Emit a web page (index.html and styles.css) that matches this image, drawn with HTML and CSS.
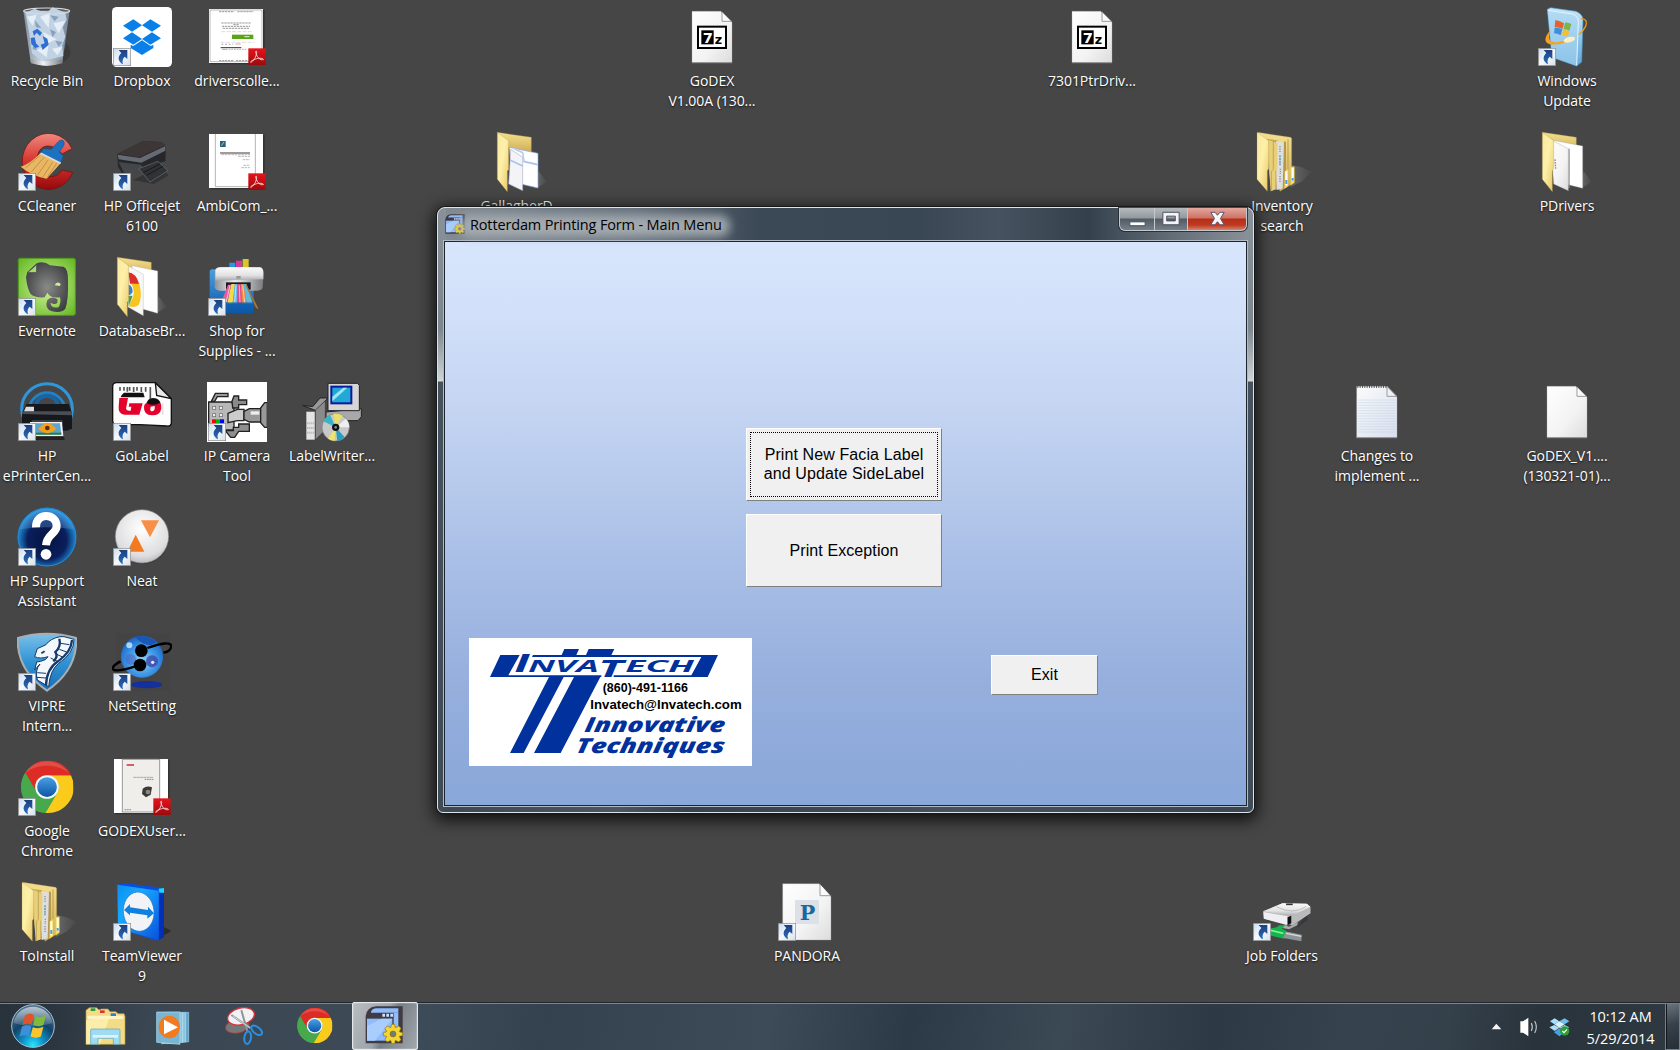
FILE: index.html
```html
<!DOCTYPE html>
<html lang="en">
<head>
<meta charset="utf-8">
<title>Desktop</title>
<link rel="stylesheet" href="styles.css">
</head>
<body>
<svg class="defs" width="0" height="0" aria-hidden="true">
  <defs>
    <linearGradient id="folderFront" x1="0" y1="0" x2="1" y2="1"><stop offset="0" stop-color="#fbe9a0"/><stop offset=".45" stop-color="#fdf0a8"/><stop offset="1" stop-color="#e8c765"/></linearGradient>
    <linearGradient id="folderBack" x1="0" y1="0" x2="0" y2="1"><stop offset="0" stop-color="#f5e08e"/><stop offset="1" stop-color="#cfae55"/></linearGradient>
    <linearGradient id="paper" x1="0" y1="0" x2="1" y2="1"><stop offset="0" stop-color="#ffffff"/><stop offset=".6" stop-color="#f3f3f3"/><stop offset="1" stop-color="#dcdcdc"/></linearGradient>
    <linearGradient id="note" x1="0" y1="0" x2="1" y2="1"><stop offset="0" stop-color="#fafbfc"/><stop offset="1" stop-color="#d9dfee"/></linearGradient>
    <linearGradient id="chip" x1="0" y1="0" x2="1" y2="1"><stop offset="0" stop-color="#c9dcf0"/><stop offset=".5" stop-color="#f6f9fc"/><stop offset="1" stop-color="#d5e0ea"/></linearGradient>
    <linearGradient id="arrowBlue" x1="0" y1="0" x2="0" y2="1"><stop offset="0" stop-color="#1d3f7e"/><stop offset="1" stop-color="#2a6cc0"/></linearGradient>
    <linearGradient id="pdfRed" x1="0" y1="0" x2="0" y2="1"><stop offset="0" stop-color="#e8131a"/><stop offset="1" stop-color="#9c0a0c"/></linearGradient>
    <linearGradient id="steel" x1="0" y1="0" x2="1" y2="0"><stop offset="0" stop-color="#8e9296"/><stop offset=".4" stop-color="#f0f1f2"/><stop offset="1" stop-color="#77797c"/></linearGradient>
    <linearGradient id="bin" x1="0" y1="0" x2="1" y2="0"><stop offset="0" stop-color="#7f8f9d"/><stop offset=".4" stop-color="#ccd8e4"/><stop offset="1" stop-color="#748494"/></linearGradient>
    <linearGradient id="redC" x1="0" y1="0" x2="0" y2="1"><stop offset="0" stop-color="#f08a80"/><stop offset=".45" stop-color="#d93a34"/><stop offset="1" stop-color="#96090d"/></linearGradient>
    <linearGradient id="blueV" x1="0" y1="0" x2="0" y2="1"><stop offset="0" stop-color="#4aa0e4"/><stop offset="1" stop-color="#0b55a5"/></linearGradient>
    <linearGradient id="grayV" x1="0" y1="0" x2="0" y2="1"><stop offset="0" stop-color="#fafafa"/><stop offset=".6" stop-color="#e2e2e4"/><stop offset="1" stop-color="#a8a9ab"/></linearGradient>
    <linearGradient id="shade" x1="0" y1="0" x2="1" y2="0"><stop offset="0" stop-color="#777" stop-opacity=".8"/><stop offset="1" stop-color="#666" stop-opacity=".15"/></linearGradient>
    <radialGradient id="green" cx=".5" cy=".5" r=".7"><stop offset="0" stop-color="#d4f5a0"/><stop offset="1" stop-color="#62b51e"/></radialGradient>
    <radialGradient id="eleph" cx=".5" cy=".5" r=".6"><stop offset="0" stop-color="#8a8a8a"/><stop offset="1" stop-color="#3b3c3e"/></radialGradient>
    <radialGradient id="qBlue" cx=".5" cy=".55" r=".52"><stop offset="0" stop-color="#06123f"/><stop offset=".65" stop-color="#0a1f5c"/><stop offset="1" stop-color="#2192dc"/></radialGradient>
    <radialGradient id="ball" cx=".5" cy=".35" r=".65"><stop offset="0" stop-color="#fff"/><stop offset=".8" stop-color="#dedee0"/><stop offset="1" stop-color="#bdbdc0"/></radialGradient>
    <radialGradient id="globe" cx=".5" cy=".6" r=".6"><stop offset="0" stop-color="#8fd4f8"/><stop offset=".6" stop-color="#3b92e4"/><stop offset="1" stop-color="#1a62c4"/></radialGradient>
    <linearGradient id="shield" x1="0" y1="0" x2="0" y2="1"><stop offset="0" stop-color="#7cc0ea"/><stop offset=".5" stop-color="#2f93d4"/><stop offset="1" stop-color="#1a6db4"/></linearGradient>
    <linearGradient id="tvBlue" x1="0" y1="0" x2="1" y2="1"><stop offset="0" stop-color="#0890f0"/><stop offset=".35" stop-color="#18a8ff"/><stop offset="1" stop-color="#0a52dc"/></linearGradient>
    <linearGradient id="wu" x1="0" y1="0" x2="0" y2="1"><stop offset="0" stop-color="#c8e6f8"/><stop offset="1" stop-color="#5fa8dc"/></linearGradient>
    <radialGradient id="orb" cx=".5" cy=".95" r=".9"><stop offset="0" stop-color="#26e6ff"/><stop offset=".3" stop-color="#0d8cc4"/><stop offset=".6" stop-color="#124468"/><stop offset="1" stop-color="#4d6f8a"/></radialGradient>
    <linearGradient id="gloss" x1="0" y1="0" x2="0" y2="1"><stop offset="0" stop-color="#fff" stop-opacity=".6"/><stop offset="1" stop-color="#fff" stop-opacity=".12"/></linearGradient>

    <symbol id="shortcut" viewBox="0 0 54 54">
      <rect x="1" y="1" width="52" height="52" fill="url(#chip)" stroke="#8a8a8a" stroke-width="2"/>
      <path d="M17 6H43V33L35 26C29 32 27 38 30 49C18 43 10 29 25 15Z" fill="url(#arrowBlue)"/>
    </symbol>
    <symbol id="pdf" viewBox="0 0 54 54">
      <rect x="1" y="1" width="52" height="50" fill="url(#pdfRed)"/>
      <path d="M8 43C15 41 25 28 26 13C26 6 21 9 24 16C28 29 37 37 46 35C48 31 34 29 23 33C14 36 6 41 8 43Z" fill="none" stroke="#f7dcdc" stroke-width="2.6"/>
    </symbol>
    <symbol id="flag" viewBox="0 0 100 100">
      <path d="M20 16C34 6 44 10 51 14L43 47C34 42 24 42 12 48Z" fill="#e0542a"/>
      <path d="M56 16C68 22 78 22 92 14L84 47C72 54 60 53 48 48Z" fill="#7fba3c"/>
      <path d="M10 54C22 47 33 48 42 53L34 86C24 81 14 81 2 87Z" fill="#3f8fd8"/>
      <path d="M47 55C60 60 70 60 83 54L75 86C63 93 50 92 39 87Z" fill="#f9c52c"/>
    </symbol>
    <symbol id="chrome" viewBox="0 0 160 160">
      <circle cx="80" cy="80" r="79" fill="#3c9c46"/>
      <path d="M14 37A79 79 0 0 1 154 45H80A36 36 0 0 0 46 92Z" fill="#dd2c25"/>
      <path d="M153 45A79 79 0 0 1 75 159L112 96A36 36 0 0 0 80 45Z" fill="#fbcb1b"/>
      <path d="M14 37L50 98A36 36 0 0 0 111 98L75 159A79 79 0 0 1 14 37Z" fill="#47a94b"/>
      <path d="M14 37A79 79 0 0 1 146 37C110 8 50 8 14 37Z" fill="#fff" opacity=".16"/>
      <circle cx="80" cy="80" r="36" fill="#f4f6f7"/>
      <circle cx="80" cy="80" r="30" fill="url(#blueV)"/>
    </symbol>
    <symbol id="fullFolder" viewBox="0 0 180 180">
      <path d="M116 165L150 148L178 120L150 106L112 98Z" fill="url(#shade)"/>
      <path d="M17 1L116 16L119 19V104L127 106V152L84 178L60 120Z" fill="url(#folderBack)" stroke="#a88d45"/>
      <path d="M40 20L76 25L74 172L58 176Z" fill="#c9a953"/>
      <path d="M72 28L96 32V168L74 174Z" fill="#dedede"/>
      <path d="M84 42V62M85 110V126M84 132V150" stroke="#8f959c" stroke-width="4" stroke-dasharray="4 3"/><path d="M84 70V100" stroke="#6fa3b4" stroke-width="5" stroke-dasharray="6 2"/>
      <path d="M96 28L102 30V116L96 170L92 172Z" fill="#b5984b"/><path d="M108 22V112" stroke="#b99c50" stroke-width="3"/>
      <path d="M98 118L108 112V162L98 170Z" fill="#f4dc4c"/><rect x="100" y="118" width="6" height="42" fill="#fff"/><rect x="100" y="144" width="6" height="12" fill="#4d9be6"/>
      <path d="M116 106L127 103V152L116 160Z" fill="#f4dc4c"/><rect x="119" y="108" width="6" height="40" fill="#fff"/><rect x="119" y="138" width="6" height="8" fill="#4d9be6"/>
      <path d="M50 24L76 34V112L70 116V172L56 178L52 120Z" fill="#e8cf78"/><path d="M64 28V112L58 118V176" fill="none" stroke="#bb9f52" stroke-width="2.500"/>
      <path d="M15 1L50 26V110L46 116V178L15 142Z" fill="url(#folderFront)" stroke="#b3964a" stroke-width=".8"/>
    </symbol>
    <symbol id="paperFolder" viewBox="0 0 180 180">
      <path d="M130 170L164 150L140 118Z" fill="url(#shade)"/>
      <path d="M16 1L118 16V60L60 60Z" fill="url(#folderBack)" stroke="#a88d45"/>
    </symbol>
    <symbol id="blankDoc" viewBox="0 0 180 180">
      <path d="M30 13H116L150 46V167H30Z" fill="url(#paper)" stroke="#aaa" stroke-width="1"/>
      <path d="M30 167H150" stroke="#8e8e8e" stroke-width="3"/>
      <path d="M120 13V43H149Z" fill="#fbfbfb" stroke="#9b9b9b" stroke-width="3"/>
      <path d="M117 11H151V44Z" fill="#464646"/>
    </symbol>
    <symbol id="appIcon" viewBox="0 0 114 114">
      <path d="M2 112V30Q6 3 34 1H113V112Z" fill="#3f3a44"/>
      <path d="M18 17Q24 7 34 7H100V20H18Z" fill="#8fbcfb"/>
      <rect x="6" y="38" width="76" height="66" fill="#8fbcfb"/>
      <path d="M6 104V60L50 38H82L30 104Z" fill="#a9cdfd"/>
      <path d="M52 28H60M64 28H72M76 28H84" stroke="#cfe0ff" stroke-width="9"/>
      <rect x="86" y="20" width="14" height="60" fill="#8fbcfb"/>
      <g transform="translate(84 84)">
        <path d="M-4-29H5L7-19L17-24L24-17L19-7L29-4V5L19 7L24 17L17 24L7 19L5 29H-4L-7 19L-17 24L-24 17L-19 7L-29 5V-4L-19-7L-24-17L-17-24L-7-19Z" fill="#f4d633" stroke="#927000" stroke-width="2"/>
        <circle r="9" fill="#6c7c80" stroke="#927000" stroke-width="2"/>
      </g>
    </symbol>
  </defs>
</svg>

<main class="desktop">
  <div class="item" style="--c:1;--r:1"><div class="icon"><svg class="art" viewBox="51 21 180 180">
    <path d="M182 190Q230 170 200 130Z" fill="#2d2d2d" opacity=".5"/>
    <path d="M70 32L92 186Q140 208 187 186L209 32Z" fill="url(#bin)"/>
    <path d="M76 38L104 26L138 40L158 22L196 38L200 60L188 82L196 110L186 138L190 168L150 178L118 176L96 160L88 100Z" fill="#c0d2e4"/>
    <path d="M80 50L110 44L98 78ZM120 50L150 38L146 84ZM160 70L196 62L176 100ZM130 96L170 118L138 132ZM110 150L146 132L140 172ZM156 146L188 140L172 166Z" fill="#e6eef6"/>
    <path d="M104 60L124 84L108 82ZM150 88L168 96L158 112ZM166 122L188 126L176 140ZM150 46L176 50L164 64ZM100 130L112 150L98 148Z" fill="#8aa1ba"/>
    <path d="M98 94L112 86L126 98L120 108L110 98L102 108ZM92 114L104 112L108 130L118 140L106 144L94 132ZM128 108L142 116L146 134L128 150L122 134L134 130Z" fill="#2f6fd4"/>
    <path d="M90 176Q140 192 189 176L187 190Q140 204 93 190Z" fill="url(#steel)"/>
    <ellipse cx="140" cy="33" rx="69" ry="9" fill="none" stroke="#d5dade" stroke-width="3.5"/>
  </svg></div><span class="label">Recycle Bin</span></div>

  <div class="item" style="--c:2;--r:1"><div class="icon"><svg class="art" viewBox="336 21 180 180">
    <rect x="336" y="21" width="180" height="180" rx="14" fill="#fff"/>
    <g fill="#0b7fe8"><path d="M400 58L426 76L396 95L369 77Z"/><path d="M451 58L483 77L456 95L426 76Z"/><path d="M396 97L426 117L400 134L369 115Z"/><path d="M456 97L483 115L451 134L426 117Z"/><path d="M426 121L452 138L460 134V144L426 165L392 144V134L400 138Z"/></g>
  </svg><svg class="badge"><use href="#shortcut"/></svg></div><span class="label">Dropbox</span></div>

  <div class="item" style="--c:3;--r:1"><div class="icon"><svg class="art" viewBox="621 21 180 180">
    <rect x="630" y="30" width="164" height="163" fill="#222" opacity=".5"/>
    <rect x="627" y="27" width="162" height="162" fill="#fff"/><path d="M630 30H786V185H630Z" fill="none" stroke="#999" stroke-width="2"/>
    <path d="M657 35H703M712 35H760M664 69H752M700 74H716M666 79H750M668 85H748M657 182H700M708 182H742" stroke="#666" stroke-width="2" stroke-dasharray="7 2"/>
    <path d="M664 95H754M662 127H762" stroke="#ccc" stroke-width="2" stroke-dasharray="12 4"/>
    <rect x="696" y="104" width="64" height="13" fill="#58a618"/><path d="M733 110H748" stroke="#dff0cc" stroke-width="3"/>
    <path d="M664 133H700" stroke="#bbb" stroke-width="4" stroke-dasharray="6 5"/><path d="M706 132H722" stroke="#e99" stroke-width="3"/>
    <path d="M662 143H724" stroke="#333" stroke-width="3"/><path d="M666 148H682" stroke="#6d6" stroke-width="3"/><path d="M686 148H742" stroke="#888" stroke-width="2" stroke-dasharray="5 3"/>
  </svg><svg class="badge pdf"><use href="#pdf"/></svg></div><span class="label">driverscolle...</span></div>

  <div class="item" style="--c:8;--r:1"><div class="icon"><svg class="art" viewBox="0 0 180 180"><use href="#blankDoc"/>
    <rect x="48" y="59" width="84" height="64" fill="#fff" stroke="#000" stroke-width="6"/><rect x="58" y="70" width="37" height="42" fill="#000"/>
    <text x="62" y="108" class="zip" font-size="44" fill="#fff">7</text><text x="98" y="111" class="zip" font-size="38" fill="#000">z</text>
  </svg></div><span class="label">GoDEX<br>V1.00A (130...</span></div>

  <div class="item" style="--c:12;--r:1"><div class="icon"><svg class="art" viewBox="0 0 180 180"><use href="#blankDoc"/>
    <rect x="48" y="59" width="84" height="64" fill="#fff" stroke="#000" stroke-width="6"/><rect x="58" y="70" width="37" height="42" fill="#000"/>
    <text x="62" y="108" class="zip" font-size="44" fill="#fff">7</text><text x="98" y="111" class="zip" font-size="38" fill="#000">z</text>
  </svg></div><span class="label">7301PtrDriv...</span></div>

  <div class="item" style="--c:17;--r:1"><div class="icon"><svg class="art" viewBox="651 21 180 180">
    <path d="M682 28L692 23L768 34Q790 44 789 60L785 186L770 198L696 172Z" fill="url(#wu)" stroke="#4d94c4" stroke-width="2"/>
    <path d="M682 28L756 40Q776 46 776 64L770 198L696 172Z" fill="#a8d6f2" opacity=".6"/><path d="M685 31L756 42Q775 48 775 64L770 196" fill="none" stroke="#e8f6ff" stroke-width="3"/>
    <path d="M706 60Q720 62 732 70L728 86Q714 80 704 82Z" fill="#e4622f"/><path d="M735 68Q744 66 754 72L748 92Q740 88 731 88Z" fill="#7ab648"/><path d="M704 84Q716 82 727 88L722 106Q712 100 702 100Z" fill="#3f8fd8"/><path d="M730 90Q740 90 748 94L743 110Q734 106 725 106Z" fill="#f7bf2c"/>
    <path d="M782 56Q804 56 798 76Q792 92 776 104" fill="none" stroke="#f39c12" stroke-width="4"/>
    <path d="M692 90C656 128 684 152 764 116L758 110C704 136 676 134 692 90Z" fill="#f7a11c"/><ellipse cx="748" cy="119" rx="18" ry="8" fill="#fff2c8" opacity=".95" transform="rotate(-15 748 119)"/>
  </svg><svg class="badge"><use href="#shortcut"/></svg></div><span class="label">Windows<br>Update</span></div>

  <div class="item" style="--c:1;--r:2"><div class="icon"><svg class="art" viewBox="51 396 180 180">
    <path d="M216 446A79 84 0 1 0 218 518L186 510Q174 532 146 530Q110 526 110 484Q112 442 140 438Q166 436 186 462Z" fill="url(#redC)" stroke="#7a0a0c" stroke-width="2"/>
    <path d="M172 428Q182 414 192 424Q196 434 186 444L178 456L190 468L182 490L122 460L130 446L154 448Z" fill="#1c72c0" stroke="#0d4a88" stroke-width="1.5"/>
    <path d="M122 458L182 490L140 536Q96 528 62 500Q92 490 122 458Z" fill="#e9b764"/><path d="M118 468L76 504M132 472L94 516M144 480L112 526M158 486L128 532M170 490L142 532" stroke="#b07c34" stroke-width="2"/><path d="M122 460L182 490" stroke="#d8dde2" stroke-width="5"/>
  </svg><svg class="badge"><use href="#shortcut"/></svg></div><span class="label">CCleaner</span></div>

  <div class="item" style="--c:2;--r:2"><div class="icon"><svg class="art" viewBox="336 396 180 180">
    <path d="M400 540L462 552L506 526L480 500Z" fill="#222" opacity=".5"/>
    <path d="M352 462L428 424L486 426L498 440L496 484L430 502L366 520L354 500Z" fill="#26272a"/><path d="M352 462L428 424L486 426L496 436L418 472Z" fill="#3d3637"/>
    <path d="M353 464L420 474L496 438L496 452L424 488L356 478Z" fill="#666b73"/><path d="M356 486L424 494L430 510L372 518Z" fill="#43464b"/><path d="M416 506L474 484L504 512L450 546Z" fill="#303236" stroke="#6a6f76" stroke-width="2"/><path d="M440 526L490 498M430 518L480 492" stroke="#17181a" stroke-width="3"/>
  </svg><svg class="badge"><use href="#shortcut"/></svg></div><span class="label">HP Officejet<br>6100</span></div>

  <div class="item" style="--c:3;--r:2"><div class="icon"><svg class="art" viewBox="621 396 180 180">
    <rect x="630" y="405" width="164" height="163" fill="#222" opacity=".5"/><rect x="627" y="402" width="162" height="162" fill="#fff"/>
    <path d="M646 402V560H766V402" fill="none" stroke="#a5a5a5" stroke-width="2.5"/><rect x="660" y="423" width="17" height="18" fill="#2c5f80"/><path d="M664 437L672 426" stroke="#9cc" stroke-width="3"/>
    <path d="M660 459H750" stroke="#888" stroke-width="5"/><path d="M664 464H750M714 469H750M728 479H750M730 496H750M724 503H750" stroke="#999" stroke-width="2" stroke-dasharray="8 2"/>
  </svg><svg class="badge pdf"><use href="#pdf"/></svg></div><span class="label">AmbiCom_...</span></div>

  <div class="item" style="--c:6;--r:2"><div class="icon"><svg class="art" viewBox="0 0 180 180"><use href="#paperFolder"/>
    <path d="M52 46L138 64V168L60 150Z" fill="#fff" stroke="#7fa3dc" stroke-width="2"/><path d="M56 52L92 76V176L50 156Z" fill="#f4f4f6" stroke="#99b" stroke-width="1.5"/>
    <path d="M54 84L92 102M94 88L137 98" stroke="#a9c2ee" stroke-width="5"/><path d="M62 48L92 62L96 88" fill="none" stroke="#b9cdf2" stroke-width="5"/>
    <path d="M16 1L50 26V114L46 116V179L16 142Z" fill="url(#folderFront)" stroke="#b3964a"/>
  </svg></div><span class="label">GallagherD...</span></div>

  <div class="item" style="--c:14;--r:2"><div class="icon"><svg class="art" viewBox="0 0 180 180"><use href="#fullFolder"/></svg></div><span class="label">Inventory<br>search</span></div>

  <div class="item" style="--c:17;--r:2"><div class="icon"><svg class="art" viewBox="0 0 180 180"><use href="#paperFolder"/>
    <path d="M44 24L137 42V169L60 150Z" fill="#fff" stroke="#999" stroke-width="1"/><path d="M96 50V168" stroke="#888" stroke-width="4"/><path d="M40 22L94 50V176L50 156Z" fill="url(#paper)" stroke="#999" stroke-width="1"/>
    <path d="M54 82L56 110" stroke="#888" stroke-width="4" stroke-dasharray="5 3"/>
    <path d="M16 1L50 26V110L46 116V179L16 142Z" fill="url(#folderFront)" stroke="#b3964a"/>
  </svg></div><span class="label">PDrivers</span></div>

  <div class="item" style="--c:1;--r:3"><div class="icon"><svg class="art" viewBox="51 51 180 180">
    <rect x="55" y="55" width="171" height="171" rx="6" fill="url(#green)" stroke="#4f9b1c" stroke-width="3"/>
    <path d="M82 96L110 70Q132 62 150 76L190 80Q204 84 204 120Q206 180 196 206Q184 220 156 214Q132 206 142 180Q156 166 172 178Q176 194 160 192L152 188Q152 206 176 202Q184 186 180 172Q152 176 142 158L134 172Q104 174 92 162Q82 148 78 112Z" fill="url(#eleph)"/>
    <path d="M82 98L110 74V98Z" fill="#a6dc6a" stroke="#555" stroke-width="3"/><path d="M164 136Q170 122 182 132L180 138Z" fill="#c9f28e"/>
  </svg><svg class="badge"><use href="#shortcut"/></svg></div><span class="label">Evernote</span></div>

  <div class="item" style="--c:2;--r:3"><div class="icon"><svg class="art" viewBox="0 0 180 180"><use href="#paperFolder"/>
    <path d="M60 26L137 42V169L70 150Z" fill="#fff" stroke="#aaa"/><path d="M48 26L94 52V176L48 150Z" fill="#f7f7f7" stroke="#aaa"/>
    <path d="M49 46Q72 48 82 82L54 80Z" fill="#d9302a"/><path d="M58 80H82Q92 118 80 144Q68 154 50 148L64 118Q68 98 58 80Z" fill="#f8c520"/><path d="M49 82Q62 88 62 104Q58 114 49 114Z" fill="#3f83c4"/><path d="M48 116H62L50 148Z" fill="#45a049"/>
    <path d="M16 1L50 26V130L46 136V179L16 142Z" fill="url(#folderFront)" stroke="#b3964a"/>
  </svg></div><span class="label">DatabaseBr...</span></div>

  <div class="item" style="--c:3;--r:3"><div class="icon"><svg class="art" viewBox="621 51 180 180">
    <rect x="629" y="88" width="132" height="132" rx="8" fill="url(#blueV)"/>
    <rect x="688" y="68" width="18" height="20" fill="#2997dc"/><rect x="708" y="62" width="18" height="26" fill="#d43b9c"/><rect x="728" y="57" width="18" height="31" fill="#d8c52e"/>
    <path d="M644 94Q646 82 658 82H780Q790 84 791 98L788 142Q786 152 772 152H660Q646 152 644 142Z" fill="url(#steel)"/><path d="M646 90Q650 82 660 82H780Q790 84 790 98V118L646 122Z" fill="url(#grayV)"/>
    <rect x="678" y="127" width="74" height="22" fill="#1c1c20"/>
    <path d="M684 134L664 186H682L694 134Z" fill="#ec5a9a"/><path d="M694 132L682 190H698L706 132Z" fill="#f4d84a"/><path d="M704 132L698 190H712L714 132Z" fill="#63b8e8"/><path d="M712 132V190H726L722 132Z" fill="#e4488e"/><path d="M722 132L726 190H740L732 132Z" fill="#f08a3c"/><path d="M730 132L740 190H758L740 132Z" fill="#67b7d8"/><path d="M738 134L774 206L768 202Z" fill="#c98b3c" stroke="#a86f35" stroke-width="3"/>
    <path d="M690 136L678 188M708 136L704 188M718 136L720 188M728 136L734 188" stroke="#fff" stroke-width="3" opacity=".6"/><rect x="709" y="108" width="13" height="8" fill="#999"/>
    <path d="M678 186H760V220H690Z" fill="#0b5cae" opacity=".45"/>
  </svg><svg class="badge"><use href="#shortcut"/></svg></div><span class="label">Shop for<br>Supplies - ...</span></div>

  <div class="item" style="--c:1;--r:4"><div class="icon"><svg class="art" viewBox="51 426 180 180">
    <g fill="none" stroke="#2f96dc"><circle cx="141" cy="507" r="76" stroke-width="9"/><path d="M88 502A54 54 0 0 1 194 502" stroke-width="9" stroke="#2280c4"/><path d="M108 500A33 33 0 0 1 174 500" stroke-width="12" stroke="#1a64a4"/></g>
    <path d="M66 518L80 492H206L216 518V566L200 572H76L66 560Z" fill="#17181b"/><path d="M66 514L216 514V526L66 522Z" fill="#4a4e54"/><path d="M72 514L78 500H102V514Z" fill="#ddd"/>
    <path d="M96 540H188V552H96Z" fill="#3a3d42"/><path d="M90 546H186L190 588H90Z" fill="#f0f0f0"/><path d="M96 550H180L184 584H96Z" fill="#5aa5d6"/><path d="M96 578H184V584H96Z" fill="#3c7a2e"/>
    <g fill="#f3a01a"><circle cx="142" cy="564" r="16"/><path d="M114 566L130 552V578ZM170 566L154 552V578Z"/></g><circle cx="142" cy="564" r="7" fill="#5a2c10"/><path d="M86 590H192L194 600H96Z" fill="#222"/>
  </svg><svg class="badge"><use href="#shortcut"/></svg></div><span class="label">HP<br>ePrinterCen...</span></div>

  <div class="item" style="--c:2;--r:4"><div class="icon"><svg class="art" viewBox="336 426 180 180">
    <path d="M350 428H466L514 476V550Q512 560 500 558L420 554L350 554Q338 552 338 542V440Q338 428 350 428Z" fill="#fdfdfd" stroke="#111" stroke-width="4"/>
    <path d="M466 428L470 466L514 476Z" fill="#e8e8e8" stroke="#111" stroke-width="4"/><path d="M360 441V452M372 441V452M382 441V455M389 441V452M401 441V456M411 441V452M424 441V456M437 441V455M451 441V478" stroke="#555" stroke-width="5"/><path d="M488 490V524" stroke="#ddd" stroke-width="4"/>
    <path d="M372 458H430L434 472H362Q364 464 372 458Z" fill="#111"/><path d="M438 498Q440 474 460 474Q480 474 482 494Z" fill="#111"/>
    <path d="M358 474H384L378 506Q380 514 392 512L394 500H386L388 490H428L418 524H374Q354 522 356 500Z" fill="#e4002b"/><path fill-rule="evenodd" d="M432 500Q434 488 442 490Q458 500 480 488Q486 494 484 506Q480 526 456 526Q430 524 432 500ZM452 500Q448 514 457 514Q466 512 464 498Z" fill="#e4002b"/>
  </svg><svg class="badge"><use href="#shortcut"/></svg></div><span class="label">GoLabel</span></div>

  <div class="item" style="--c:3;--r:4"><div class="icon"><svg class="art" viewBox="621 426 180 180">
    <rect x="621" y="426" width="180" height="180" fill="#fff"/>
    <g stroke="#222" stroke-width="4"><path d="M634 484L646 460H684V470H652L644 484Z" fill="#999"/><path d="M626 486H694L702 494V570H640L626 556Z" fill="#b8b8b8"/><path d="M696 484L702 468H716V480H740V494H716V504H698Z" fill="#8a8a8a"/><path d="M684 520L712 508H732V542H712L684 548Z" fill="#ccc"/><path d="M732 514L748 506H784V546H748L732 538Z" fill="#999"/><path d="M782 504L794 488H802V562H794L782 548Z" fill="#999"/><path d="M676 572H700V562H716V552H748V574H716L704 592H692Z" fill="#8f8f8f"/></g>
    <path d="M752 514H778V524H752Z" fill="#eee"/>
    <g fill="#eee" stroke="#666" stroke-width="2"><rect x="638" y="499" width="9" height="9"/><rect x="658" y="499" width="9" height="9"/><rect x="638" y="521" width="9" height="9"/><rect x="658" y="521" width="9" height="9"/></g>
    <rect x="636" y="538" width="12" height="12" fill="#f00"/><rect x="648" y="538" width="12" height="12" fill="#0b0"/><rect x="660" y="538" width="12" height="12" fill="#00f"/>
  </svg><svg class="badge"><use href="#shortcut"/></svg></div><span class="label">IP Camera<br>Tool</span></div>

  <div class="item" style="--c:4;--r:4"><div class="icon"><svg class="art" viewBox="906 426 180 180">
    <path d="M978 516L1084 506V530L1074 542H1000L978 534Z" fill="#a8a8a8" stroke="#222" stroke-width="3"/><path d="M984 430H1072L1078 436V512H984Z" fill="#d6d6d6" stroke="#222" stroke-width="3"/>
    <rect x="991" y="437" width="66" height="56" fill="#0a1a9c"/><rect x="997" y="443" width="54" height="44" fill="#22a8d4"/><path d="M997 470L1030 443H1042L997 484Z" fill="#9fe4f4"/>
    <path d="M908 496L938 500L960 474H984L948 512Z" fill="#999" stroke="#222" stroke-width="3"/><path d="M918 514H946V600H918Z" fill="#e4e4e4" stroke="#444" stroke-width="2"/><path d="M946 510L976 482V570L946 600Z" fill="#8a8a8a" stroke="#333" stroke-width="2"/><path d="M922 550H942M922 564H942M922 578H942" stroke="#aaa" stroke-width="6" stroke-dasharray="3 3"/>
    <circle cx="1007" cy="562" r="41" fill="#c8c8c8" stroke="#777" stroke-width="2"/><path d="M1007 562L1000 521A41 41 0 0 1 1028 527Z" fill="#e9e06c"/><path d="M1007 562L970 544A41 41 0 0 1 990 524Z" fill="#38b4c4"/><path d="M1007 562L1038 536A41 41 0 0 1 1048 562Z" fill="#eee"/><path d="M1007 562L1004 603A41 41 0 0 1 984 596Z" fill="#f0e46c"/><path d="M1007 562L1034 592A41 41 0 0 1 1012 603Z" fill="#22a0bc"/><circle cx="1007" cy="562" r="11" fill="#111"/><circle cx="1007" cy="562" r="4" fill="#888"/>
  </svg></div><span class="label">LabelWriter...</span></div>

  <div class="item" style="--c:15;--r:4"><div class="icon"><svg class="art" viewBox="0 0 180 180">
    <path d="M29 13H116L150 46V167H29Z" fill="url(#note)" stroke="#aaa"/><path d="M34 54H146M34 62H146M34 70H146M34 78H146M34 86H146M34 94H146M34 102H146M34 110H146M34 118H146M34 126H146M34 134H146M34 142H146M34 150H146" stroke="#c3d3e2" stroke-width="1.6"/>
    <path d="M31 15H118" stroke="#333" stroke-width="5" stroke-dasharray="3 4"/><path d="M29 167H150" stroke="#8e8e9a" stroke-width="3"/><path d="M120 13V43H149Z" fill="#eef1f6" stroke="#9b9b9b" stroke-width="3"/>
  </svg></div><span class="label">Changes to<br>implement ...</span></div>

  <div class="item" style="--c:17;--r:4"><div class="icon"><svg class="art" viewBox="0 0 180 180"><use href="#blankDoc"/></svg></div><span class="label">GoDEX_V1....<br>(130321-01)...</span></div>

  <div class="item" style="--c:1;--r:5"><div class="icon"><svg class="art" viewBox="51 51 180 180">
    <circle cx="141" cy="141" r="87" fill="url(#qBlue)" stroke="#1f8fd8" stroke-width="3"/><path d="M60 118A84 84 0 0 1 222 118Q140 106 60 118Z" fill="#6aa9ec" opacity=".3"/>
    <path d="M108 112C106 66 170 68 170 108C170 132 140 132 138 166" fill="none" stroke="#fff" stroke-width="24"/><circle cx="138" cy="193" r="16" fill="#fff"/>
  </svg><svg class="badge"><use href="#shortcut"/></svg></div><span class="label">HP Support<br>Assistant</span></div>

  <div class="item" style="--c:2;--r:5"><div class="icon"><svg class="art" viewBox="336 51 180 180">
    <circle cx="427" cy="141" r="81" fill="#2a2a2a" opacity=".6"/><circle cx="426" cy="139" r="80" fill="url(#ball)" stroke="#8c8c8c" stroke-width="2"/><path d="M423 91H477L450 142Z" fill="#f78f46"/><path d="M407 134L433 185H382Z" fill="#f47a20"/>
  </svg><svg class="badge"><use href="#shortcut"/></svg></div><span class="label">Neat</span></div>

  <div class="item" style="--c:1;--r:6"><div class="icon"><svg class="art" viewBox="51 426 180 180">
    <path d="M53 444Q140 418 229 444Q232 540 141 602Q50 540 53 444Z" fill="url(#shield)" stroke="#a9aeb3" stroke-width="6"/>
    <path d="M192 440L222 448Q222 490 176 520Q150 540 146 590L112 570Q104 540 120 522L104 540L110 516L122 514Q140 510 144 500Q120 508 104 500L112 476L138 464Q150 446 180 440Z" fill="#f4f8fb" stroke="#143a6c" stroke-width="3"/>
    <path d="M178 446Q184 470 166 486Q176 500 160 514M216 450Q214 486 174 514Q140 536 138 586" fill="none" stroke="#143a6c" stroke-width="7"/><path d="M182 460L208 464M178 478L200 486M168 492L190 502M152 504L172 514M112 548L138 550M110 562L138 564" stroke="#143a6c" stroke-width="3"/><path d="M124 490L134 484" stroke="#143a6c" stroke-width="5"/>
  </svg><svg class="badge"><use href="#shortcut"/></svg></div><span class="label">VIPRE<br>Intern...</span></div>

  <div class="item" style="--c:2;--r:6"><div class="icon"><svg class="art" viewBox="336 426 180 180">
    <rect x="348" y="430" width="162" height="172" fill="#424242" opacity=".5"/><circle cx="426" cy="500" r="63" fill="url(#globe)"/><path d="M404 440Q440 432 470 456L452 466Q424 462 404 440Z" fill="#1c56b4"/><circle cx="388" cy="466" r="9" fill="#cdeaff" opacity=".8"/><circle cx="456" cy="514" r="18" fill="#4048a8" opacity=".8"/><circle cx="392" cy="508" r="16" fill="#4a5cc0" opacity=".5"/><circle cx="458" cy="517" r="5" fill="#e8eaff"/>
    <path d="M442 474Q510 450 514 468Q512 486 490 488" fill="none" stroke="#000" stroke-width="7"/><path d="M362 514Q330 530 342 540Q362 544 404 530" fill="none" stroke="#000" stroke-width="7"/><circle cx="424" cy="482" r="19" fill="#000"/><circle cx="420" cy="525" r="19" fill="#000"/><ellipse cx="440" cy="584" rx="46" ry="11" fill="#14309c"/>
  </svg><svg class="badge"><use href="#shortcut"/></svg></div><span class="label">NetSetting</span></div>

  <div class="item" style="--c:1;--r:7"><div class="icon"><svg class="art" viewBox="51 51 180 180"><use href="#chrome" x="62" y="62" width="158" height="158"/></svg><svg class="badge"><use href="#shortcut"/></svg></div><span class="label">Google<br>Chrome</span></div>

  <div class="item" style="--c:2;--r:7"><div class="icon"><svg class="art" viewBox="336 51 180 180">
    <rect x="345" y="60" width="164" height="163" fill="#222" opacity=".5"/><rect x="342" y="57" width="162" height="162" fill="#fff"/><rect x="367" y="58" width="112" height="158" fill="#efeeeb" stroke="#999" stroke-width="3"/>
    <path d="M380 75H402" stroke="#c44" stroke-width="5"/><path d="M400 112H460" stroke="#aaa" stroke-width="3" stroke-dasharray="9 1"/><path d="M434 118H460M374 209H394" stroke="#888" stroke-width="3" stroke-dasharray="5 2"/><path d="M428 146Q440 136 456 142L452 164L438 172L426 162Z" fill="#3d3a36"/><circle cx="444" cy="156" r="7" fill="#8b8780"/>
  </svg><svg class="badge pdf"><use href="#pdf"/></svg></div><span class="label">GODEXUser...</span></div>

  <div class="item" style="--c:1;--r:8"><div class="icon"><svg class="art" viewBox="0 0 180 180"><use href="#fullFolder"/></svg></div><span class="label">ToInstall</span></div>

  <div class="item" style="--c:2;--r:8"><div class="icon"><svg class="art" viewBox="336 426 180 180">
    <path d="M470 600L514 572L490 560Z" fill="#222" opacity=".7"/><path d="M352 434L374 429L490 444V592L472 602L354 566Z" fill="#0a4ee0"/><path d="M478 450L492 444V592L476 600Z" fill="#0430b8"/><path d="M352 434L476 452V600L354 566Z" fill="url(#tvBlue)"/><path d="M476 446L492 444V458H478Z" fill="#18d8ff"/>
    <ellipse cx="416" cy="515" rx="46" ry="59" fill="#f1f3f6" stroke="#1674d0" stroke-width="2" transform="rotate(-6 416 515)"/><path d="M372 510L390 492V502L444 510V500L462 520L442 536V526L390 518V526Z" fill="#0f7fe0"/>
  </svg><svg class="badge"><use href="#shortcut"/></svg></div><span class="label">TeamViewer<br>9</span></div>

  <div class="item" style="--c:9;--r:8"><div class="icon"><svg class="art" viewBox="0 0 180 180">
    <path d="M17 5H126L162 44V174H17Z" fill="url(#paper)" stroke="#999"/><path d="M129 5V41H162Z" fill="#fafafa" stroke="#9b9b9b" stroke-width="3"/><path d="M127 4H163V43Z" fill="#464646"/>
    <rect x="54" y="54" width="72" height="72" rx="3" fill="#dce1e7"/><text x="68" y="113" class="pandora">P</text>
  </svg><svg class="badge"><use href="#shortcut"/></svg></div><span class="label">PANDORA</span></div>

  <div class="item" style="--c:14;--r:8"><div class="icon"><svg class="art" viewBox="1330 246 162 180" preserveAspectRatio="none">
    <path d="M1450 385L1480 360V335Z" fill="#222" opacity=".4"/><path d="M1360 334L1412 310L1478 311L1488 322V340L1440 376L1362 356Z" fill="#b9babc"/><path d="M1360 334L1412 310L1478 311L1488 320L1436 348Z" fill="url(#grayV)"/><path d="M1361 336L1426 349V376L1362 356Z" fill="#eeeef4"/><path d="M1426 352L1436 347V370L1426 375Z" fill="#111"/><path d="M1396 320Q1440 346 1476 320" stroke="#aaa" stroke-width="2" fill="none"/><path d="M1422 313H1440" stroke="#333" stroke-width="5"/>
    <path d="M1418 374L1430 380L1454 366L1452 376L1430 388L1412 384Z" fill="#aaa"/>
  </svg><svg class="cable" viewBox="0 0 105 54"><path d="M2 14L26 10L34 4H52L42 14L54 20L48 44L2 34Z" fill="#14b44c"/><path d="M4 18L46 28" stroke="#7cf0a0" stroke-width="5"/><path d="M52 22L101 32L100 52L46 42Z" fill="#8e9496"/><path d="M54 28L100 37" stroke="#d8dcde" stroke-width="4"/></svg><svg class="badge"><use href="#shortcut"/></svg></div><span class="label">Job Folders</span></div>
</main>

<section class="window">
  <header class="titlebar">
    <svg class="app-icon"><use href="#appIcon"/></svg>
    <h1 class="title">Rotterdam Printing Form - Main Menu</h1>
    <div class="controls">
      <svg class="ctl min" viewBox="0 0 34 23"><rect x="9.500" y="14.500" width="16" height="4" fill="#fff" stroke="#4a4f5c"/></svg>
      <svg class="ctl max" viewBox="0 0 32 23"><path fill-rule="evenodd" d="M7.500 4.500H24.500V17.500H7.500ZM11.500 8.500V13.500H20.500V8.500Z" fill="#f4f4f6" stroke="#4a4f5c"/></svg>
      <svg class="ctl close" viewBox="0 0 58 23"><path d="M22.500 4.500H27L29.500 7.600L32 4.500H36.500L32.600 11L36.500 17.500H32L29.500 14.400L27 17.500H22.500L26.400 11Z" fill="#f6f6f7" stroke="#54506a"/></svg>
    </div>
  </header>
  <div class="client">
    <div class="menu">
      <button class="btn focus"><span>Print New Facia Label<br>and Update SideLabel</span></button>
      <button class="btn">Print Exception</button>
    </div>
    <div class="bottom">
      <svg class="logo" viewBox="27 654 849 384">
        <rect x="27" y="654" width="849" height="384" fill="#fff"/>
        <g fill="#00319c">
          <path d="M313 687H357L349 705H305ZM386 687H463L454 705H378Z"/>
          <path d="M121 705H179L145 766H424V771H90Z"/><path d="M219 705H774L743 771H461V766H694L724 711H216Z"/>
          <path d="M267 771H311L191 999H150ZM342 771H421L302 999H222Z"/>
        </g>
        <g class="brand"><text x="163" y="756" textLength="46" lengthAdjust="spacingAndGlyphs">I</text><text x="204" y="755" textLength="212" lengthAdjust="spacingAndGlyphs">NVA</text><text x="414" y="771" textLength="76" lengthAdjust="spacingAndGlyphs">T</text><text x="496" y="755" textLength="206" lengthAdjust="spacingAndGlyphs">ECH</text></g>
        <g class="contact"><text x="428" y="816" textLength="256" lengthAdjust="spacingAndGlyphs">(860)-491-1166</text><text x="391" y="867" textLength="454" lengthAdjust="spacingAndGlyphs">Invatech@Invatech.com</text></g>
        <g class="tagline"><text transform="translate(372 937) skewX(-10)" textLength="420" lengthAdjust="spacingAndGlyphs">Innovative</text><text transform="translate(345 998) skewX(-10)" textLength="446" lengthAdjust="spacingAndGlyphs">Techniques</text></g>
      </svg>
      <button class="btn exit">Exit</button>
    </div>
  </div>
</section>

<footer class="taskbar">
  <svg class="orb" viewBox="0 21 216 144">
    <circle cx="99" cy="93" r="64" fill="url(#orb)" stroke="#a9c0d0" stroke-width="3"/><path d="M40 84A60 60 0 0 1 158 84Q100 104 40 84Z" fill="url(#gloss)"/><use href="#flag" x="57" y="48" width="88" height="88"/>
  </svg>
  <nav class="apps">
    <svg class="task" viewBox="216 21 198 144">
      <path d="M258 46L268 38H290L296 44H300L304 42H324L330 50H348L354 56H372L375 64V148H258Z" fill="#f3dc85" stroke="#b7993f" stroke-width="2"/><path d="M262 62H370V72H262Z" fill="#fdf4c4"/><rect x="272" y="40" width="14" height="8" fill="#2e9a4a"/><rect x="300" y="46" width="14" height="8" fill="#d33"/><rect x="332" y="55" width="16" height="8" fill="#2b7fd4"/><path d="M258 76L330 64L300 148H258Z" fill="#fff3b8" opacity=".7"/>
      <path d="M272 104Q272 102 276 102H356Q360 102 360 106V148H340V130H294V148H272Z" fill="#9fdcf4" stroke="#4fa4cc" stroke-width="2"/><path d="M278 124H354" stroke="#d9f4ff" stroke-width="8"/>
    </svg>
    <svg class="task" viewBox="426 21 198 144">
      <path d="M500 52H566V140L500 146Z" fill="#5fa5c8" stroke="#9fd0e6" stroke-width="2"/><path d="M484 51H556V142L484 148Z" fill="#8ac4de"/><path d="M470 51H540V148L470 142Z" fill="#78b6d4" stroke="#b9e2f2" stroke-width="2"/><path d="M548 54V144M557 54V142" stroke="#c6e9f6" stroke-width="2"/>
      <ellipse cx="508" cy="96" rx="32" ry="34" fill="#f27a1f"/><path d="M492 74L534 97L492 118Z" fill="#fff"/>
    </svg>
    <svg class="task" viewBox="636 21 198 144">
      <ellipse cx="712" cy="94" rx="36" ry="20" fill="#777" stroke="#b33" stroke-width="2" transform="rotate(-10 712 94)"/><ellipse cx="723" cy="64" rx="41" ry="25" fill="#f2f2f4" stroke="#d0343a" stroke-width="4" transform="rotate(-14 723 64)"/>
      <path d="M694 60L752 100M724 46L742 108" stroke="#8b959c" stroke-width="6"/><path d="M698 63L750 98" stroke="#fff" stroke-width="2"/><ellipse cx="770" cy="106" rx="19" ry="10" fill="none" stroke="#2a8fe0" stroke-width="6" transform="rotate(38 770 106)"/><ellipse cx="743" cy="128" rx="10" ry="19" fill="none" stroke="#2a8fe0" stroke-width="6" transform="rotate(8 743 128)"/>
    </svg>
    <svg class="task" viewBox="846 21 198 144"><use href="#chrome" x="891" y="39" width="106" height="106"/></svg>
    <svg class="task active" viewBox="1056 21 198 144"><use href="#appIcon" x="1095" y="33" width="114" height="114"/></svg>
  </nav>
  <div class="tray">
    <svg class="tray-icons" viewBox="84 21 252 144">
      <path d="M95 103L109 86L124 103Z" fill="#f4f4f4"/>
      <path d="M181 79H189V113H181ZM189 79L205 68V124L189 113Z" fill="#fff"/><path d="M214 84Q220 96 214 108M224 78Q234 96 224 114" fill="none" stroke="#bfc4c8" stroke-width="3.500"/>
      <g fill="#a9defc"><path d="M284 70L298 79L283 88L270 79Z"/><path d="M314 70L328 79L314 88L298 79Z" fill="#6fbdf0"/><path d="M283 90L298 98L284 108L268 97Z"/><path d="M314 90L327 97L313 107L298 98Z"/><path d="M298 100L316 110L298 124L282 112Z" fill="#4a9fe0"/><path d="M283 88L298 79L314 88L298 98Z" fill="#d9f3ff"/></g><circle cx="314" cy="108" r="14" fill="#2f9e38"/><path d="M307 108L312 113L321 103" fill="none" stroke="#fff" stroke-width="3.500"/>
    </svg>
    <div class="clock">10:12 AM<br>5/29/2014</div>
    <div class="show-desktop"></div>
  </div>
</footer>
</body>
</html>
```

FILE: styles.css
```css
* { box-sizing: border-box; }

body {
  margin: 0;
  width: 1680px;
  height: 1050px;
  overflow: hidden;
  position: relative;
  display: flex;
  flex-direction: column;
  background: #464646;
  font-family: "Open Sans", "Noto Sans", sans-serif;
}

.defs { position: absolute; }

/* Desktop icon grid */
.desktop {
  flex: 1;
  display: grid;
  grid-template-columns: repeat(17, 95px);
  grid-template-rows: repeat(8, 125px);
  height: 1002px;
}

.item {
  grid-column: var(--c);
  grid-row: var(--r);
  display: flex;
  flex-direction: column;
  align-items: center;
  gap: 4px;
  padding-top: 7px;
  width: 94px;
}

.icon { position: relative; width: 60px; height: 60px; flex: none; }
.art { display: block; width: 60px; height: 60px; }
.badge { position: absolute; left: 1px; top: 41px; width: 18px; height: 18px; }
.badge.pdf { left: 41px; top: 41px; }
.cable { position: absolute; left: 16px; top: 42px; width: 35px; height: 18px; }

.label {
  color: #fff;
  font-size: 14px;
  line-height: 20px;
  letter-spacing: -0.05px;
  text-align: center;
  white-space: nowrap;
  text-shadow: 0 1px 2px #111;
}

.zip { font-family: "DejaVu Sans", sans-serif; font-weight: 700; }
.pandora { font-family: "DejaVu Serif", "Liberation Serif", serif; font-weight: 700; font-size: 62px; fill: #1769a0; }

/* Application window */
.window {
  position: absolute;
  left: 437px;
  top: 207px;
  width: 817px;
  height: 606px;
  display: flex;
  flex-direction: column;
  padding: 0 6px 6px;
  border: 1px solid #dde3e6;
  border-radius: 8px 8px 6px 6px;
  background:
    linear-gradient(#8a9299, #7c868e 120px, #cbd0d2 170px, #d6d9da 173px, #46525e 174px, #3f4b57) left / 8px 100% no-repeat,
    linear-gradient(#8a9299, #7c868e 120px, #cbd0d2 170px, #d6d9da 173px, #46525e 174px, #3f4b57) right / 8px 100% no-repeat,
    linear-gradient(90deg, #848c93, #65717c 200px, #3b4855 320px, #394653 480px, #46525f 560px, #34414d 650px, #66707a 740px, #8b9299) top / 100% 40px no-repeat,
    linear-gradient(90deg, #3d4854, #4a5661 180px, #35424f 250px, #3d4955 400px, #46525d 520px, #394652);
  box-shadow: 0 0 0 1px #16191c, 0 4px 16px 3px rgba(0, 0, 0, 0.8);
}

.titlebar { display: flex; height: 32px; align-items: flex-start; }
.app-icon { width: 20px; height: 20px; margin: 6px 0 0 1px; }

.title {
  position: relative;
  z-index: 0;
  margin: 4px 0 0 5px;
  font-size: 14.5px;
  font-weight: 400;
  line-height: 26px;
  letter-spacing: -0.15px;
  white-space: nowrap;
  color: #000;
}

.title::before {
  content: "";
  position: absolute;
  z-index: -1;
  inset: 3px -8px 1px -10px;
  border-radius: 10px;
  background: #a9afb4;
  filter: blur(5px);
  opacity: 0.9;
}

.controls {
  display: flex;
  gap: 1px;
  margin-left: auto;
  height: 23px;
  padding: 0 1px 1px;
  background: #c4c9cd;
  border-radius: 0 0 6px 6px;
  box-shadow: 0 0 0 1px rgba(30, 36, 44, 0.8);
}

.ctl { height: 22px; }
.min { width: 34px; border-radius: 0 0 0 5px; }
.max { width: 32px; }
.close { width: 58px; border-radius: 0 0 5px 0; }
.min, .max { background: linear-gradient(#b5babd, #94999d 10px, #515b64 11px, #76808a); }
.close { background: linear-gradient(#e5a79d, #cd7265 10px, #b72e18 11px, #bd3a20 17px, #d6826b); }

.client {
  flex: 1;
  display: flex;
  flex-direction: column;
  border: 1px solid #1c242e;
  outline: 1px solid #b4bac0;
  margin: 1px 0 0;
  background: linear-gradient(#d7e5fd, #d1dff8 14%, #c2d3f1 32%, #a8bee6 58%, #96afdd 78%, #89a7d9);
}

.menu {
  display: flex;
  flex-direction: column;
  align-items: flex-start;
  gap: 13px;
  padding: 186px 0 0 301px;
}

.btn {
  width: 196px;
  height: 73px;
  padding: 0;
  border: 1px solid;
  border-color: #fff #808080 #808080 #fff;
  background: #f0f0f0;
  color: #000;
  font: 16px/19px "Liberation Sans", Arial, sans-serif;
  letter-spacing: 0.1px;
}

.focus { padding: 3px; }
.focus span { display: flex; justify-content: center; align-items: center; height: 100%; padding-bottom: 2px; border: 1px dotted #000; }

.bottom { display: flex; align-items: flex-start; padding: 51px 0 0 24px; }
.logo { width: 283px; height: 128px; }
.exit { width: 107px; height: 40px; margin: 17px 0 0 239px; padding-bottom: 2px; }

.brand { font: italic 700 48px "Open Sans", sans-serif; fill: #00319c; }
.brand text:nth-child(1) { font-size: 74px; }
.brand text:nth-child(3) { font-size: 68px; }
.contact { font: 700 41px "Liberation Sans", Arial, sans-serif; fill: #000; }
.tagline { font: italic 800 62px "Open Sans", sans-serif; fill: #00319c; }

/* Taskbar */
.taskbar {
  flex: none;
  display: flex;
  height: 48px;
  border-top: 1px solid #20262b;
  box-shadow: inset 0 1px #7f878d;
  background: linear-gradient(100deg, #28323b, #2c3640 60px, #3a4753 150px, #3d4a57 420px, #34424f 540px, #3d4b59 760px, #2c3a48 900px, #3b4955 1050px, #2d3945 1200px, #36434e 1330px, #34404a 1430px, #29333c 1520px, #2f3941);
}

.orb { width: 72px; height: 48px; margin-top: -1px; }
.apps { display: flex; gap: 4px; margin-top: -1px; }
.task { width: 66px; height: 48px; }

.active {
  border-radius: 3px;
  background: linear-gradient(115deg, #b9bec2, #9da4a9 45%, #777f86 55%, #a4a9ad);
  box-shadow: inset 0 0 0 1px #e4e7e9, inset 0 0 0 2px rgba(255, 255, 255, 0.15);
}

.tray { display: flex; margin-left: auto; }
.tray-icons { width: 84px; height: 48px; margin-top: -1px; }

.clock {
  width: 93px;
  padding: 3px 0 0 4px;
  text-align: center;
  color: #fff;
  font-size: 14.5px;
  line-height: 22px;
  letter-spacing: -0.1px;
}

.show-desktop {
  width: 15px;
  height: 47px;
  border: 1px solid #76808a;
  background: linear-gradient(160deg, #6b757e, #38424b 45%, #252d35);
  box-shadow: inset 1px 0 #14181c;
}
```
